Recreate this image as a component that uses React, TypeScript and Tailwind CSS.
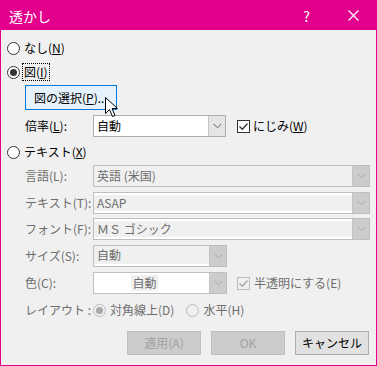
import React from 'react';

const FONT = "font-['Noto_Sans_CJK_JP','Noto_Sans',sans-serif]";

function Radio({ checked = false, disabled = false }: { checked?: boolean; disabled?: boolean }) {
  return (
    <span
      className={`w-[13px] h-[13px] rounded-full border flex items-center justify-center shrink-0 ${
        disabled ? 'border-[#BCBCBC] bg-[#F0F0F0]' : 'border-[#333333] bg-white'
      }`}
    >
      {checked && (
        <span className={`w-[7px] h-[7px] rounded-full ${disabled ? 'bg-[#A8A8A8]' : 'bg-[#333333]'}`} />
      )}
    </span>
  );
}

function Checkbox({ disabled = false }: { disabled?: boolean }) {
  return (
    <span
      className={`w-[13px] h-[13px] border flex items-center justify-center shrink-0 ${
        disabled ? 'border-[#BCBCBC] bg-[#F0F0F0]' : 'border-[#333333] bg-white'
      }`}
    >
      <svg width="11" height="11" viewBox="0 0 11 11">
        <polyline
          points="1.5,5.5 4.3,8.3 9.5,2.5"
          fill="none"
          stroke={disabled ? '#A8A8A8' : '#333333'}
          strokeWidth="1.3"
        />
      </svg>
    </span>
  );
}

function Chevron({ color }: { color: string }) {
  return (
    <svg width="9" height="6" viewBox="0 0 9 6">
      <polyline points="0.5,0.8 4.5,4.8 8.5,0.8" fill="none" stroke={color} strokeWidth="1" />
    </svg>
  );
}

function Combo({
  value,
  width,
  disabled = false,
  variant = 'plain',
}: {
  value: string;
  width: string;
  disabled?: boolean;
  variant?: 'plain' | 'edit' | 'bottom' | 'color';
}) {
  const frame = disabled ? 'border-[#BFBFBF]' : 'border-[#ADADAD]';
  let inner = 'bg-white';
  if (variant === 'plain' && disabled) inner = 'bg-[#F0F0F0]';
  if (variant === 'edit') inner = 'bg-[#F0F0F0] border-t-2 border-b-2 border-white';
  if (variant === 'bottom') inner = 'bg-[#F0F0F0] border-b-2 border-white';
  return (
    <div className={`${width} h-[22px] border ${frame} flex shrink-0`}>
      <div className={`flex-1 flex items-center ${inner} ${variant === 'color' ? 'justify-center' : 'pl-[3px]'}`}>
        <span
          className={`leading-none ${disabled ? 'text-[#6D6D6D]' : 'text-black'} ${
            variant === 'color' ? 'bg-[#F0F0F0] px-[1px] py-[2px] ml-[-14px]' : ''
          }`}
        >
          {value}
        </span>
      </div>
      <div
        className={`w-[17px] flex items-center justify-center border-l ${
          disabled ? 'bg-[#CCCCCC] border-[#C4C4C4]' : 'bg-[#E5E5E5] border-[#C4C4C4]'
        }`}
      >
        <Chevron color={disabled ? '#A8A8A8' : '#606060'} />
      </div>
    </div>
  );
}

function Label({ children, disabled = false }: { children: React.ReactNode; disabled?: boolean }) {
  return (
    <span className={`w-[68px] shrink-0 whitespace-nowrap leading-none ${disabled ? 'text-[#6D6D6D]' : 'text-black'}`}>
      {children}
    </span>
  );
}

export default function App() {
  return (
    <div className={`w-[377px] h-[366px] border border-[#E3008C] bg-[#F0F0F0] flex flex-col ${FONT}`}>
      {/* title bar */}
      <div className="h-[29px] bg-[#E3008C] flex items-center text-white shrink-0">
        <span className="pl-[8px] text-[14px] leading-none">透かし</span>
        <span className="ml-auto text-[14px] leading-none mr-[38px]">?</span>
        <svg width="11" height="11" viewBox="0 0 11 11" className="mr-[17px]">
          <path d="M0.5 0.5 L10.5 10.5 M10.5 0.5 L0.5 10.5" stroke="white" strokeWidth="1.2" />
        </svg>
      </div>

      <div className="flex flex-col pl-[6px] pt-[10px] text-[12px] leading-none text-black">
        {/* なし */}
        <div className="h-[16px] flex items-center gap-[4px]">
          <Radio />
          <span>
            なし(<span className="underline">N</span>)
          </span>
        </div>

        {/* 図 */}
        <div className="h-[16px] mt-[8px] flex items-center gap-[2px]">
          <Radio checked />
          <span className="border border-dotted border-black px-[1px] py-[2px]">
            図(<span className="underline">I</span>)
          </span>
        </div>

        {/* 図の選択 */}
        <div className="relative mt-[5px] ml-[18px] w-[92px] h-[25px] border border-[#0078D7] bg-[#E5F1FB] flex items-center pl-[8px] whitespace-nowrap">
          <span>
            図の選択(<span className="underline">P</span>)...
          </span>
          <svg
            width="14"
            height="21"
            viewBox="0 0 14 21"
            className="absolute left-[79px] top-[11px]"
          >
            <path
              d="M0.5 0.5 L0.5 16.5 L4.5 12.5 L7.5 19.5 L10 18.5 L7 11.5 L12.5 11.5 Z"
              fill="white"
              stroke="black"
              strokeWidth="1"
              strokeLinejoin="round"
            />
          </svg>
        </div>

        {/* 倍率 */}
        <div className="mt-[5px] ml-[18px] flex items-center">
          <Label>
            倍率(<span className="underline">L</span>):
          </Label>
          <Combo value="自動" width="w-[133px]" />
          <div className="ml-[11px] flex items-center gap-[3px]">
            <Checkbox />
            <span>
              にじみ(<span className="underline">W</span>)
            </span>
          </div>
        </div>

        {/* テキスト */}
        <div className="h-[16px] mt-[7px] flex items-center gap-[4px]">
          <Radio />
          <span>
            テキスト(<span className="underline">X</span>)
          </span>
        </div>

        <div className="mt-[5px] ml-[18px] flex items-center">
          <Label disabled>言語(L):</Label>
          <Combo value="英語 (米国)" width="w-[277px]" disabled />
        </div>
        <div className="mt-[5px] ml-[18px] flex items-center">
          <Label disabled>テキスト(T):</Label>
          <Combo value="ASAP" width="w-[277px]" disabled variant="edit" />
        </div>
        <div className="mt-[4px] ml-[18px] flex items-center">
          <Label disabled>フォント(F):</Label>
          <Combo value="ＭＳ ゴシック" width="w-[277px]" disabled variant="edit" />
        </div>
        <div className="mt-[5px] ml-[18px] flex items-center">
          <Label disabled>サイズ(S):</Label>
          <Combo value="自動" width="w-[134px]" disabled variant="bottom" />
        </div>
        <div className="mt-[5px] ml-[18px] flex items-center">
          <Label disabled>色(C):</Label>
          <Combo value="自動" width="w-[134px]" disabled variant="color" />
          <div className="ml-[10px] flex items-center gap-[4px] text-[#6D6D6D]">
            <Checkbox disabled />
            <span>半透明にする(E)</span>
          </div>
        </div>

        {/* レイアウト */}
        <div className="h-[16px] mt-[8px] ml-[18px] flex items-center text-[#6D6D6D]">
          <Label disabled>レイアウト :</Label>
          <div className="flex items-center gap-[4px]">
            <Radio checked disabled />
            <span>対角線上(D)</span>
          </div>
          <div className="ml-[12px] flex items-center gap-[4px]">
            <Radio disabled />
            <span>水平(H)</span>
          </div>
        </div>

        {/* buttons */}
        <div className="mt-[13px] pr-[7px] flex justify-end gap-[10px]">
          <div className="w-[74px] h-[24px] border border-[#BFBFBF] bg-[#CCCCCC] flex items-center justify-center text-[#A0A0A0]">
            適用(A)
          </div>
          <div className="w-[74px] h-[24px] border border-[#BFBFBF] bg-[#CCCCCC] flex items-center justify-center text-[#A0A0A0]">
            OK
          </div>
          <div className="w-[74px] h-[24px] border border-[#ADADAD] bg-[#E1E1E1] flex items-center justify-center text-black">
            キャンセル
          </div>
        </div>
      </div>
    </div>
  );
}
